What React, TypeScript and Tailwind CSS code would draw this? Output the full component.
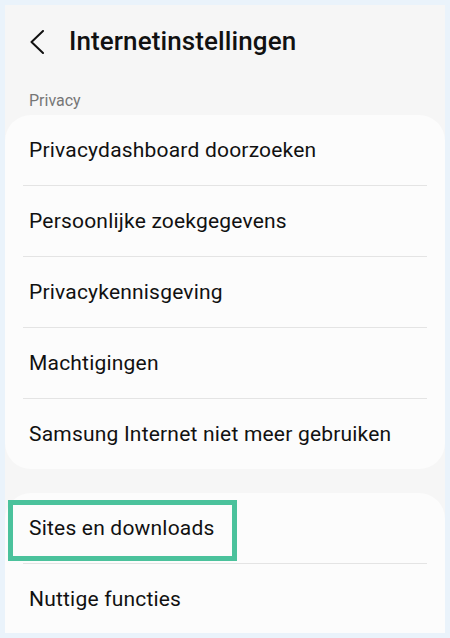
import React from "react";

const privacyItems = [
  "Privacydashboard doorzoeken",
  "Persoonlijke zoekgegevens",
  "Privacykennisgeving",
  "Machtigingen",
  "Samsung Internet niet meer gebruiken",
];

function Row({ label, last }: { label: string; last?: boolean }) {
  return (
    <div>
      <div className="h-[70px] flex items-center pl-[24px] pt-[2px] text-[21px] tracking-[0.2px] text-[#111111]">{label}</div>
      {!last && <div className="mx-[18px] h-px bg-[#e4e4e4]" />}
    </div>
  );
}

export default function App() {
  return (
    <div
      className="w-[450px] h-[638px] bg-[#eaf3fb] p-[5px] overflow-hidden"
      style={{ fontFamily: "Roboto, 'Noto Sans', sans-serif" }}
    >
      <div className="h-full bg-[#f6f6f6] overflow-hidden">
        <div className="h-[72px] flex items-center pl-[25px] pt-[1px]">
          <svg width="14" height="24" viewBox="0 0 14 24" fill="none" className="shrink-0">
            <path d="M13 1 L1.5 12 L13 23" stroke="#111111" strokeWidth="2" strokeLinecap="round" strokeLinejoin="round" />
          </svg>
          <h1 className="ml-[25px] text-[26px] font-medium text-[#111111] tracking-[0.1px]">Internetinstellingen</h1>
        </div>
        <div className="pl-[24px] h-[38px] pt-[12px] text-[16px] text-[#767676]">Privacy</div>
        <div className="bg-[#fcfcfc] rounded-[26px]">
          {privacyItems.map((item, i) => (
            <Row key={item} label={item} last={i === privacyItems.length - 1} />
          ))}
        </div>
        <div className="mt-[24px] bg-[#fcfcfc] rounded-t-[26px] relative">
          <Row label="Sites en downloads" />
          <Row label="Nuttige functies" last />
          <div className="absolute left-[3px] top-[7px] w-[229px] h-[61px] border-[5px] border-[#4bc29c]" />
        </div>
      </div>
    </div>
  );
}
